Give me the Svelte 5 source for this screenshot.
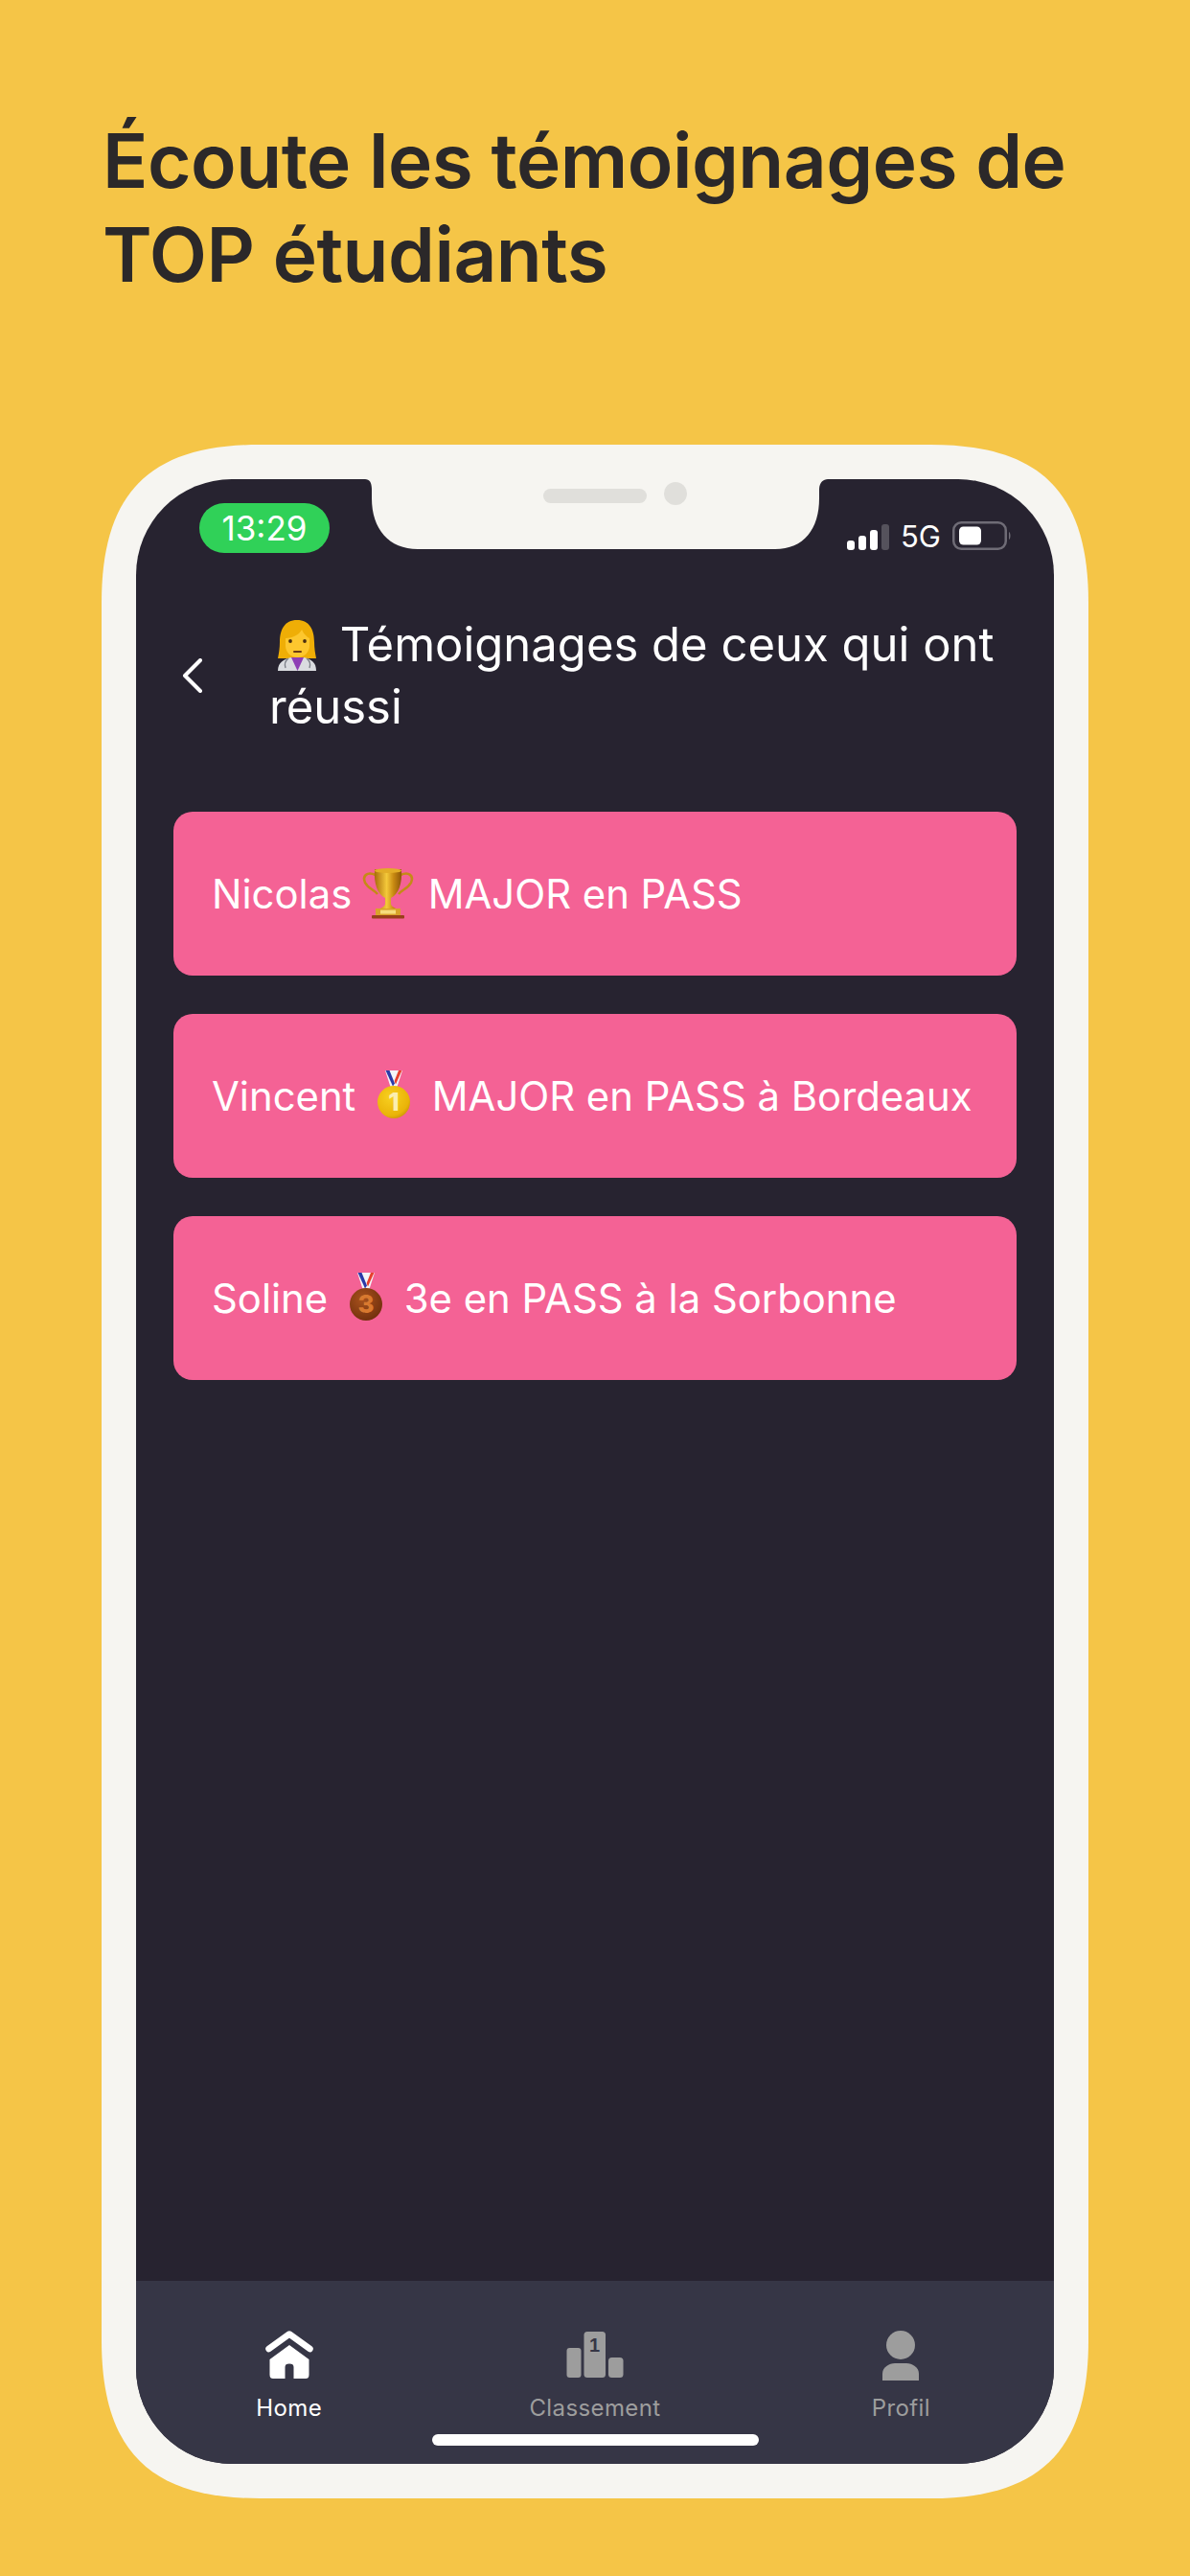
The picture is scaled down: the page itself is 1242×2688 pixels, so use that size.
<script>
  const testimonials = [
    { name: "Nicolas", medal: "trophy", text: "MAJOR en PASS" },
    { name: "Vincent", medal: "gold", text: "MAJOR en PASS à Bordeaux" },
    { name: "Soline", medal: "bronze", text: "3e en PASS à la Sorbonne" }
  ];
  const tabs = ["Home", "Classement", "Profil"];
</script>

{#snippet ribbon()}
  <path d="M19 2 H37 L31.5 19 H24.5 Z" fill="#f4f4f8" />
  <path d="M19.5 2 H23.5 L29 15.5 L27 18.5 Z" fill="#2b3aa8" />
  <path d="M36.5 2 H33 L28.6 13 L30 16.5 Z" fill="#e8402f" />
{/snippet}

{#snippet emoji(kind)}
  {#if kind === "trophy"}
    <svg class="emoji trophy" viewBox="0 0 56 56" aria-hidden="true">
      <defs>
        <linearGradient id="cup" x1="0" x2="1" y1="0" y2="0">
          <stop offset="0" stop-color="#a86a0c" />
          <stop offset="0.45" stop-color="#f4c93a" />
          <stop offset="0.7" stop-color="#c98a12" />
          <stop offset="1" stop-color="#8d5508" />
        </linearGradient>
      </defs>
      <path d="M15 9 C6 5 1 10 4 17 C7 23 13 24 17 29 M41 9 C50 5 55 10 52 17 C49 23 43 24 39 29" fill="none" stroke="#c58a16" stroke-width="2.6" />
      <path d="M14 3 H42 C43 18 39 29 31 33 V39 C31 41 34 43 36 44 H20 C22 43 25 41 25 39 V33 C17 29 13 18 14 3 Z" fill="url(#cup)" />
      <ellipse cx="28" cy="4.5" rx="14" ry="2.6" fill="#e3ad26" />
      <rect x="15" y="44" width="26" height="7" fill="#d9a32a" />
      <rect x="20" y="45.6" width="16" height="4" fill="#f6dd7c" />
      <rect x="11" y="51" width="34" height="3.5" rx="1" fill="#99401a" />
    </svg>
  {:else}
    <svg class="emoji" viewBox="0 0 56 56" aria-hidden="true">
      <defs>
        <radialGradient id="gold-fill" cx="0.4" cy="0.35" r="0.75">
          <stop offset="0" stop-color="#f8d020" />
          <stop offset="0.75" stop-color="#eab308" />
          <stop offset="1" stop-color="#c08a04" />
        </radialGradient>
        <radialGradient id="bronze-fill" cx="0.4" cy="0.35" r="0.75">
          <stop offset="0" stop-color="#a9521c" />
          <stop offset="1" stop-color="#6d2d0c" />
        </radialGradient>
      </defs>
      {@render ribbon()}
      <circle cx="28" cy="35" r="17" fill={kind === "gold" ? "url(#gold-fill)" : "url(#bronze-fill)"} />
      <text class="digit" x="28" y="44" text-anchor="middle" fill={kind === "gold" ? "#fbeeb0" : "#d9792f"}>{kind === "gold" ? "1" : "3"}</text>
    </svg>
  {/if}
{/snippet}

<main class="page">
  <h1>Écoute les témoignages de<br />TOP étudiants</h1>

  <div class="phone">
    <div class="screen">
      <svg class="notch" viewBox="0 0 483 74" aria-hidden="true">
        <path d="M0 0 H483 C478 0 474 4 474 11 V20 C474 52 458 73 428 73 H55 C25 73 7 52 7 20 V11 C7 4 5 0 0 0 Z" fill="#f6f5f1" />
        <rect x="186" y="10" width="108" height="15" rx="7.5" fill="#e0dfdb" />
        <circle cx="324" cy="15" r="12" fill="#e0dfdb" />
      </svg>

      <div class="status">
        <span class="time">13:29</span>
        <div class="indicators">
          <div class="signal">
            <i class="b1"></i><i class="b2"></i><i class="b3"></i><i class="b4"></i>
          </div>
          <span class="net">5G</span>
          <svg class="battery" width="62" height="30" viewBox="0 0 62 30" aria-hidden="true">
            <rect x="1.25" y="1.25" width="54.5" height="27.5" rx="8" fill="none" stroke="#6f6c76" stroke-width="2.5" />
            <rect x="7" y="5.5" width="23" height="19" rx="4.5" fill="#fff" />
            <path d="M59 11 C61 12 61 18 59 19 Z" fill="#6f6c76" />
          </svg>
        </div>
      </div>

      <header class="nav">
        <svg class="back" width="22" height="36" viewBox="0 0 22 36" aria-hidden="true">
          <path d="M19 2 L3 18 L19 34" fill="none" stroke="#fff" stroke-width="4" stroke-linecap="round" stroke-linejoin="round" />
        </svg>
        <h2>
          <svg class="doctor" viewBox="0 0 56 56" aria-hidden="true">
            <path d="M28 3 C15 3 10 13 10 26 C10 32 9 38 8 43 H48 C47 38 46 32 46 26 C46 13 41 3 28 3 Z" fill="#efae06" />
            <path d="M8 56 C8 47 14 44 22 42 H35 C43 44 48 47 48 56 Z" fill="#dadce0" />
            <path d="M22 42 L28.5 56 L35 42 Z" fill="#8e3fb5" />
            <path d="M16 22 C22 22 30 19 33 13 C35 18 39 21 41 22 V30 C41 37 35 42 28.5 42 C22 42 16 37 16 30 Z" fill="#fdc72e" />
            <circle cx="21" cy="25" r="1.9" fill="#4a2f10" />
            <circle cx="36" cy="25" r="1.9" fill="#4a2f10" />
            <path d="M25 36 H32" stroke="#6b3a12" stroke-width="2" stroke-linecap="round" />
            <path d="M19 43 C15 46 15 50 16 53 M38 43 C42 46 42 50 41 53" fill="none" stroke="#7d8189" stroke-width="1.4" />
          </svg>
          Témoignages de ceux qui ont réussi
        </h2>
      </header>

      <section class="list">
        {#each testimonials as t}
          <div class="card">
            <span>{t.name} {@render emoji(t.medal)} {t.text}</span>
          </div>
        {/each}
      </section>

      <nav class="tabbar">
        <div class="tabs">
          {#each tabs as label, i}
            <div class="tab" class:active={i === 0}>
              {#if i === 0}
                <svg width="50" height="52" viewBox="0 0 50 52" aria-hidden="true">
                  <path d="M3.5 19 L25 3.5 L46.5 19" fill="none" stroke="#fff" stroke-width="6.5" stroke-linecap="round" stroke-linejoin="round" />
                  <path d="M25 15 L45.5 30 V46 C45.5 49 44 50 42 50 H29.5 V38 C29.5 35.5 28 34.5 25 34.5 C22 34.5 20.5 35.5 20.5 38 V50 H8 C6 50 4.5 49 4.5 46 V30 Z" fill="#fff" />
                </svg>
              {:else if i === 1}
                <svg width="60" height="52" viewBox="0 0 60 52" aria-hidden="true">
                  <rect x="0.5" y="18" width="15" height="31" rx="3" fill="#9d9d9d" />
                  <rect x="18.5" y="1" width="22.5" height="48" rx="3.5" fill="#9d9d9d" />
                  <rect x="44" y="28" width="15.5" height="21" rx="3.5" fill="#9d9d9d" />
                  <text class="rank" x="29.8" y="22" text-anchor="middle">1</text>
                </svg>
              {:else}
                <svg width="40" height="52" viewBox="0 0 40 52" aria-hidden="true">
                  <circle cx="20" cy="15" r="15" fill="#9d9d9d" />
                  <path d="M1 52 V45 C1 38 8 34 14 34 H26 C32 34 39 38 39 45 V52 Z" fill="#9d9d9d" />
                </svg>
              {/if}
              <span>{label}</span>
            </div>
          {/each}
        </div>
        <div class="home-bar"></div>
      </nav>
    </div>
  </div>
</main>

<style>
  :global(body) {
    margin: 0;
    background: #f5c547;
  }

  .page {
    width: 1242px;
    height: 2688px;
    box-sizing: border-box;
    padding-top: 119px;
    background: #f5c547;
    font-family: Inter, "Liberation Sans", sans-serif;
    overflow: hidden;
  }

  h1 {
    margin: 0 0 0 107px;
    font-size: 78.3px;
    font-weight: 600;
    line-height: 98px;
    letter-spacing: -0.5px;
    color: #2b2829;
  }

  .phone {
    width: 1030px;
    height: 2143px;
    box-sizing: border-box;
    margin: 149px 0 0 106px;
    padding: 36px;
    background: #f6f5f1;
    clip-path: path("M0 165 C0 50 50 0 165 0 H865 C980 0 1030 50 1030 165 V1978 C1030 2093 980 2143 865 2143 H165 C50 2143 0 2093 0 1978 Z");
  }

  .screen {
    position: relative;
    height: 2071px;
    display: flex;
    flex-direction: column;
    border-radius: 100px;
    overflow: hidden;
    background: #272330;
    color: #fff;
  }

  .notch {
    position: absolute;
    top: 0;
    left: 239px;
    width: 483px;
    height: 74px;
  }

  .status {
    height: 52px;
    padding: 25px 44px 0 66px;
    display: flex;
    justify-content: space-between;
    align-items: flex-end;
  }

  .time {
    width: 136px;
    height: 52px;
    border-radius: 26px;
    background: #30d158;
    font-size: 35px;
    line-height: 52px;
    text-align: center;
  }

  .indicators {
    display: flex;
    align-items: flex-end;
    margin-bottom: 3px;
  }

  .signal {
    display: flex;
    align-items: flex-end;
    gap: 4px;
    margin-right: 12px;
  }

  .signal i {
    width: 8px;
    border-radius: 3px;
    background: #fff;
  }

  .b1 { height: 10px; }
  .b2 { height: 15px; }
  .b3 { height: 21px; }

  .signal .b4 {
    height: 27px;
    background: #55525c;
  }

  .net {
    font-size: 31px;
    line-height: 29px;
    margin-right: 12px;
  }

  .nav {
    display: flex;
    align-items: center;
    margin-top: 63px;
    padding-left: 48px;
  }

  .back {
    flex: none;
    margin-right: 69px;
  }

  h2 {
    margin: 0;
    width: 780px;
    font-size: 49px;
    font-weight: 400;
    line-height: 65px;
  }

  .doctor {
    width: 56px;
    height: 56px;
    vertical-align: -10px;
    margin: 0 3px 0 1px;
  }

  .list {
    display: flex;
    flex-direction: column;
    gap: 40px;
    margin-top: 77px;
    padding: 0 39px;
  }

  .card {
    height: 171px;
    box-sizing: border-box;
    padding: 0 40px;
    display: flex;
    align-items: center;
    border-radius: 20px;
    background: #f46295;
    font-size: 41.8px;
    line-height: 56px;
    white-space: pre-wrap;
  }

  .emoji {
    width: 56px;
    height: 56px;
    vertical-align: -12px;
  }

  .emoji.trophy {
    margin-left: -2px;
    margin-right: 2px;
  }

  .digit {
    font-size: 26px;
    font-weight: 800;
  }

  .tabbar {
    margin-top: auto;
    height: 191px;
    box-sizing: border-box;
    padding-top: 52px;
    background: #363646;
  }

  .tabs {
    display: grid;
    grid-template-columns: repeat(3, 1fr);
  }

  .tab {
    display: flex;
    flex-direction: column;
    align-items: center;
    color: #9d9d9d;
    font-size: 24px;
    line-height: 30px;
    letter-spacing: 0.4px;
  }

  .tab svg {
    display: block;
    margin-bottom: 14px;
  }

  .tab.active {
    color: #fff;
  }

  .rank {
    font-family: "Liberation Sans", sans-serif;
    font-size: 20px;
    font-weight: 700;
    fill: #363646;
  }

  .home-bar {
    width: 341px;
    height: 12px;
    margin: 12px auto 0;
    border-radius: 6px;
    background: #fff;
  }
</style>
